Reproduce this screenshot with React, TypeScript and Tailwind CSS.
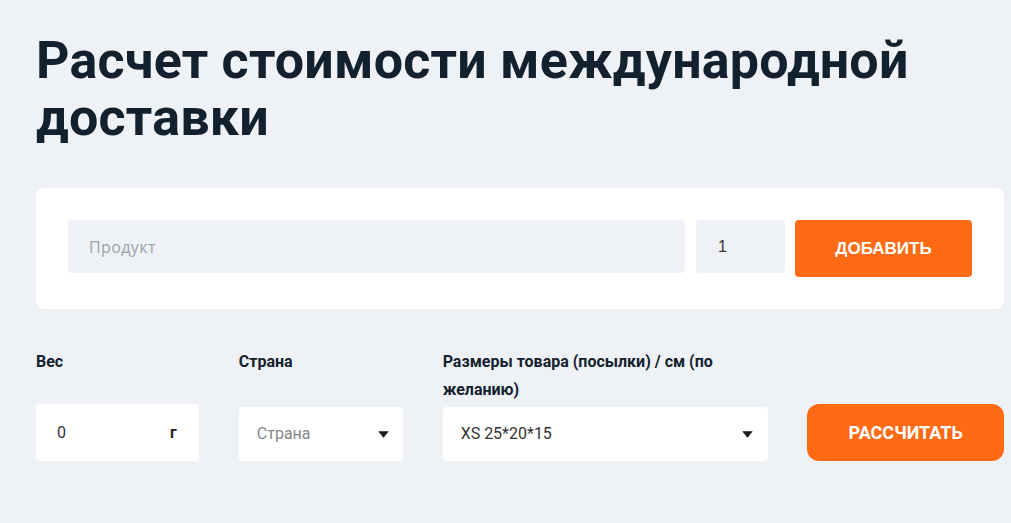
import React from 'react';

const Caret = () => (
  <svg width="11" height="7" viewBox="0 0 11 7" className="shrink-0">
    <path d="M0.8 0.6 H10.2 L5.5 6.4 Z" fill="#1b1b1b" stroke="#1b1b1b" strokeWidth="0.6" strokeLinejoin="round" />
  </svg>
);

const App: React.FC = () => {
  return (
    <div className="min-h-[523px] w-full bg-[#eef2f6] pl-[36px] pr-[7px] pt-[32px] font-['Roboto',sans-serif] text-[#12212d]">
      {/* TITLE */}
      <h1 className="text-[52px] font-bold leading-[57px] tracking-[0.2px]">
        Расчет стоимости международной
        <br />
        доставки
      </h1>

      {/* PRODUCT CARD */}
      <div className="mt-[42px] flex items-start gap-[11px] rounded-lg bg-white px-[32px] pb-[32px] pt-[32px]">
        <div className="flex h-[53px] flex-1 items-center rounded bg-[#eef2f6] px-[21px] font-['Open_Sans',sans-serif] text-[16px] tracking-[0.4px] text-[#9aa2ab]">
          Продукт
        </div>
        <div className="flex h-[53px] w-[89px] items-center rounded bg-[#eef2f6] px-[22px] font-['Liberation_Sans',sans-serif] text-[16px] text-[#333]">
          1
        </div>
        <button className="ml-[-1px] flex h-[57px] w-[177px] items-center justify-center rounded bg-[#ff6a13] font-['Liberation_Sans',sans-serif] text-[17px] font-bold text-white">
          ДОБАВИТЬ
        </button>
      </div>

      {/* CALC ROW */}
      <div className="mt-[39px] flex items-end">
        <div className="flex w-[163px] flex-col">
          <div className="h-[56px] text-[16px] font-bold leading-[28px]">Вес</div>
          <div className="flex h-[57px] items-center justify-between rounded bg-white pl-[21px] pr-[22px] text-[16px] text-[#333]">
            <span>0</span>
            <span className="font-bold text-[#222]">г</span>
          </div>
        </div>

        <div className="ml-[40px] flex w-[164px] flex-col">
          <div className="h-[56px] text-[16px] font-bold leading-[28px]">Страна</div>
          <div className="mt-[3px] flex h-[54px] items-center justify-between rounded bg-white pl-[18px] pr-[14px] text-[16px] text-[#888]">
            <span>Страна</span>
            <Caret />
          </div>
        </div>

        <div className="ml-[40px] flex w-[326px] flex-col">
          <div className="h-[56px] pr-[20px] text-[16px] font-bold leading-[28px]">
            Размеры товара (посылки) / см (по желанию)
          </div>
          <div className="mt-[3px] flex h-[54px] items-center justify-between rounded bg-white pl-[18px] pr-[15px] text-[16px] text-[#333]">
            <span>XS 25*20*15</span>
            <Caret />
          </div>
        </div>

        <button className="ml-[39px] flex h-[57px] w-[197px] items-center justify-center rounded-xl bg-[#ff6a13] text-[18px] font-bold text-white">
          РАССЧИТАТЬ
        </button>
      </div>
    </div>
  );
};

export default App;
